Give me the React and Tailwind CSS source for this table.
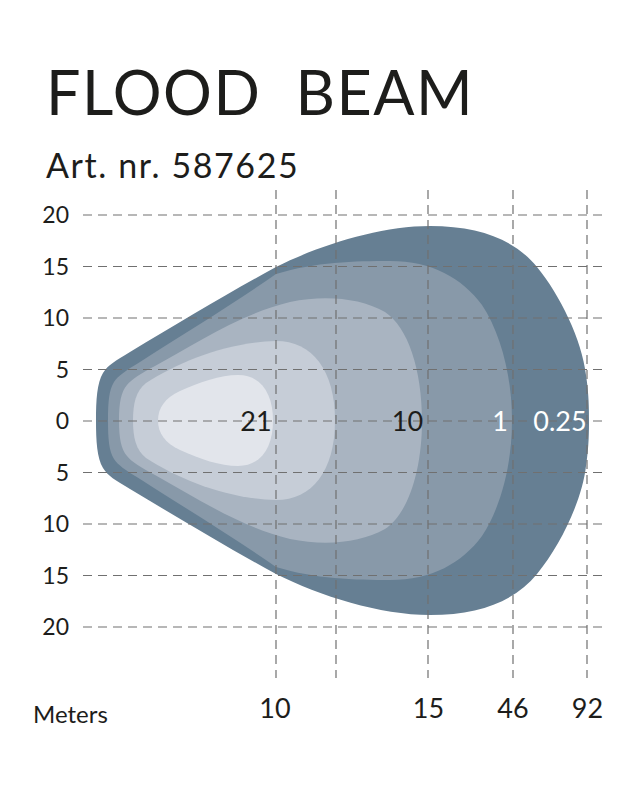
import React from "react";

const CY = 420.5;

function buildPath(start, segs) {
  const pts = [start];
  segs.forEach((s) => pts.push([s[4], s[5]]));
  let d = `M${start[0]},${start[1]}`;
  segs.forEach((s) => {
    d += ` C${s[0]},${s[1]} ${s[2]},${s[3]} ${s[4]},${s[5]}`;
  });
  const m = (y) => 2 * CY - y;
  for (let i = segs.length - 1; i >= 0; i--) {
    const s = segs[i];
    const p = pts[i];
    d += ` C${s[2]},${m(s[3])} ${s[0]},${m(s[1])} ${p[0]},${m(p[1])}`;
  }
  return d + " Z";
}

const shapes = [
  {
    fill: "#667f93",
    start: [96, CY],
    segs: [
      [96, 400, 97, 383, 103, 373],
      [108, 365, 115, 361, 130, 352],
      [180, 322, 230, 292, 276, 267],
      [320, 245, 380, 226, 430, 226],
      [480, 226, 515, 240, 537, 267],
      [560, 295, 582, 340, 586, 375],
      [589, 395, 589, 410, 589, CY],
    ],
  },
  {
    fill: "#8899a9",
    start: [108, CY],
    segs: [
      [108, 402, 109, 390, 114, 382],
      [118, 376, 125, 371, 140, 362],
      [185, 333, 235, 303, 276, 274],
      [315, 262, 355, 261, 390, 261],
      [432, 261, 462, 278, 482, 305],
      [500, 332, 512, 375, 512, CY],
    ],
  },
  {
    fill: "#a9b4c1",
    start: [119, CY],
    segs: [
      [119, 403, 121, 392, 127, 385],
      [132, 379, 140, 374, 155, 366],
      [195, 344, 240, 314, 290, 302],
      [325, 295, 360, 298, 385, 312],
      [408, 327, 422, 370, 422, CY],
    ],
  },
  {
    fill: "#c6cdd7",
    start: [133, CY],
    segs: [
      [133, 403, 136, 391, 146, 383],
      [180, 361, 228, 342, 276, 341],
      [312, 341, 335, 370, 335, CY],
    ],
  },
  {
    fill: "#e2e5eb",
    start: [158, CY],
    segs: [
      [158, 408, 165, 398, 180, 391],
      [200, 382, 220, 375, 238, 375],
      [262, 375, 273, 395, 273, CY],
    ],
  },
];

const hLines = [215, 266.5, 318, 369.5, 421, 472.5, 524, 575.5, 627];
const yLabels = ["20", "15", "10", "5", "0", "5", "10", "15", "20"];
const vLines = [276, 336, 428, 513, 587];

const xLabels = [
  { t: "10", x: 275 },
  { t: "15", x: 428.5 },
  { t: "46", x: 513 },
  { t: "92", x: 587.5 },
];

const values = [
  { t: "21", x: 256, c: "#1d1d1b" },
  { t: "10", x: 407.5, c: "#1d1d1b" },
  { t: "1", x: 500, c: "#ffffff" },
  { t: "0.25", x: 560, c: "#ffffff" },
];

export default function App() {
  return (
    <div className="w-[640px] h-[800px] bg-white text-[#1d1d1b] font-['Lato',sans-serif] overflow-hidden">
      <header className="h-[185px] pl-[46px] pt-[61px] flex flex-col">
        <h1 className="text-[61px] leading-none font-normal tracking-[1.5px] whitespace-pre">FLOOD  BEAM</h1>
        <p className="mt-[26px] text-[34px] leading-none tracking-[1.6px]">Art. nr. 587625</p>
      </header>
      <svg
        width="640"
        height="615"
        viewBox="0 185 640 615"
        className="block font-['Lato',sans-serif]"
      >
        {shapes.map((s, i) => (
          <path key={i} d={buildPath(s.start, s.segs)} fill={s.fill} />
        ))}
        <g stroke="#707070" strokeWidth="1.2" strokeDasharray="9 6" fill="none">
          {hLines.map((y) => (
            <line key={y} x1="83" y1={y} x2="605" y2={y} />
          ))}
          {vLines.map((x) => (
            <line key={x} x1={x} y1="190" x2={x} y2="678" />
          ))}
        </g>
        <g fontSize="23" fill="#1d1d1b" textAnchor="end">
          {hLines.map((y, i) => (
            <text key={i} x="69" y={y + 8}>
              {yLabels[i]}
            </text>
          ))}
        </g>
        <g fontSize="27" textAnchor="middle">
          {values.map((v) => (
            <text key={v.t} x={v.x} y="431" fill={v.c}>
              {v.t}
            </text>
          ))}
        </g>
        <g fontSize="27" fill="#1d1d1b" textAnchor="middle">
          {xLabels.map((l) => (
            <text key={l.t} x={l.x} y="718">
              {l.t}
            </text>
          ))}
        </g>
        <text x="33" y="723" fontSize="24" fill="#1d1d1b">
          Meters
        </text>
      </svg>
    </div>
  );
}
